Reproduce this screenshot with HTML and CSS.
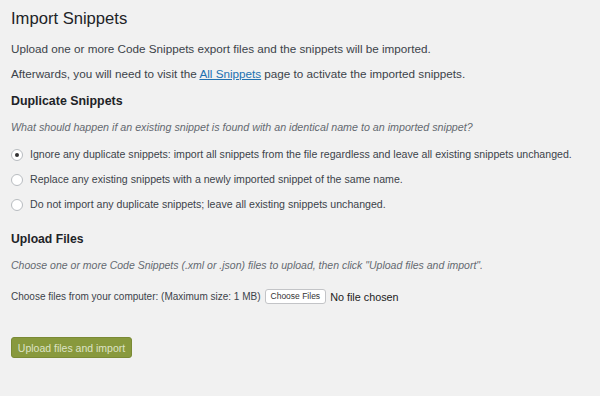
FILE: index.html
```html
<!DOCTYPE html>
<html lang="en">
<head>
  <meta charset="UTF-8">
  <title>Import Snippets</title>
  <link rel="stylesheet" href="styles.css">
</head>
<body>
  <div class="wrap">
    <h1>Import Snippets</h1>
    <p>Upload one or more Code Snippets export files and the snippets will be imported.</p>
    <p>Afterwards, you will need to visit the <a href="#">All Snippets</a> page to activate the imported snippets.</p>

    <h2>Duplicate Snippets</h2>
    <p class="desc">What should happen if an existing snippet is found with an identical name to an imported snippet?</p>

    <div class="options">
      <label class="option"><span class="radio checked"></span>Ignore any duplicate snippets: import all snippets from the file regardless and leave all existing snippets unchanged.</label>
      <label class="option"><span class="radio"></span>Replace any existing snippets with a newly imported snippet of the same name.</label>
      <label class="option"><span class="radio"></span>Do not import any duplicate snippets; leave all existing snippets unchanged.</label>
    </div>

    <h2 class="upload-title">Upload Files</h2>
    <p class="desc desc-short">Choose one or more Code Snippets (.xml or .json) files to upload, then click "Upload files and import".</p>

    <div class="file-row">
      <span>Choose files from your computer: (Maximum size: 1 MB)</span>
      <span class="file-btn">Choose Files</span>
      <span class="file-none">No file chosen</span>
    </div>

    <button class="submit" type="button">Upload files and import</button>
  </div>
</body>
</html>
```

FILE: styles.css
```css
html, body { margin: 0; background: #f1f1f1; }
body { font-family: "Liberation Sans", Arial, sans-serif; font-size: 10.6px; color: #3c434a; }
.wrap { padding: 8px 11px; }
h1 { margin: 0 0 12px; font-size: 16.6px; font-weight: 400; color: #1d2327; line-height: 22px; }
h2 { margin: 9px 0 11px; font-size: 12.4px; font-weight: 700; color: #1d2327; line-height: 18px; }
p { margin: 0 0 12px; line-height: 13px; font-size: 11.7px; }
a { color: #2271b1; }
.desc { font-style: italic; color: #646970; font-size: 10.7px; }
.desc-short { font-size: 10.5px; }
.options { display: flex; flex-direction: column; gap: 12px; margin-top: 14px; }
.option { display: flex; align-items: center; gap: 7px; line-height: 13px; }
.radio { width: 10px; height: 10px; border: 1px solid #b8bcc0; border-radius: 50%; background: #fff; display: flex; align-items: center; justify-content: center; }
.radio.checked::after { content: ""; width: 4px; height: 4px; border-radius: 50%; background: #333; }
.upload-title { margin-top: 19px; font-size: 12.2px; }
.file-row { display: flex; align-items: center; gap: 4px; margin-top: 17px; font-size: 10px; }
.file-btn { font-size: 8.5px; color: #333; background: #fff; border: 1px solid #c3c4c7; border-radius: 3px; padding: 1px 5px; line-height: 11px; }
.file-none { font-size: 10.8px; color: #222; }
.submit { display: block; margin-top: 33px; font-family: inherit; font-size: 10.5px; color: #dde3c6; background: #88993d; border: 1px solid #7a8a35; border-radius: 3px; height: 21px; padding: 0; width: 121px; white-space: nowrap; }
```
